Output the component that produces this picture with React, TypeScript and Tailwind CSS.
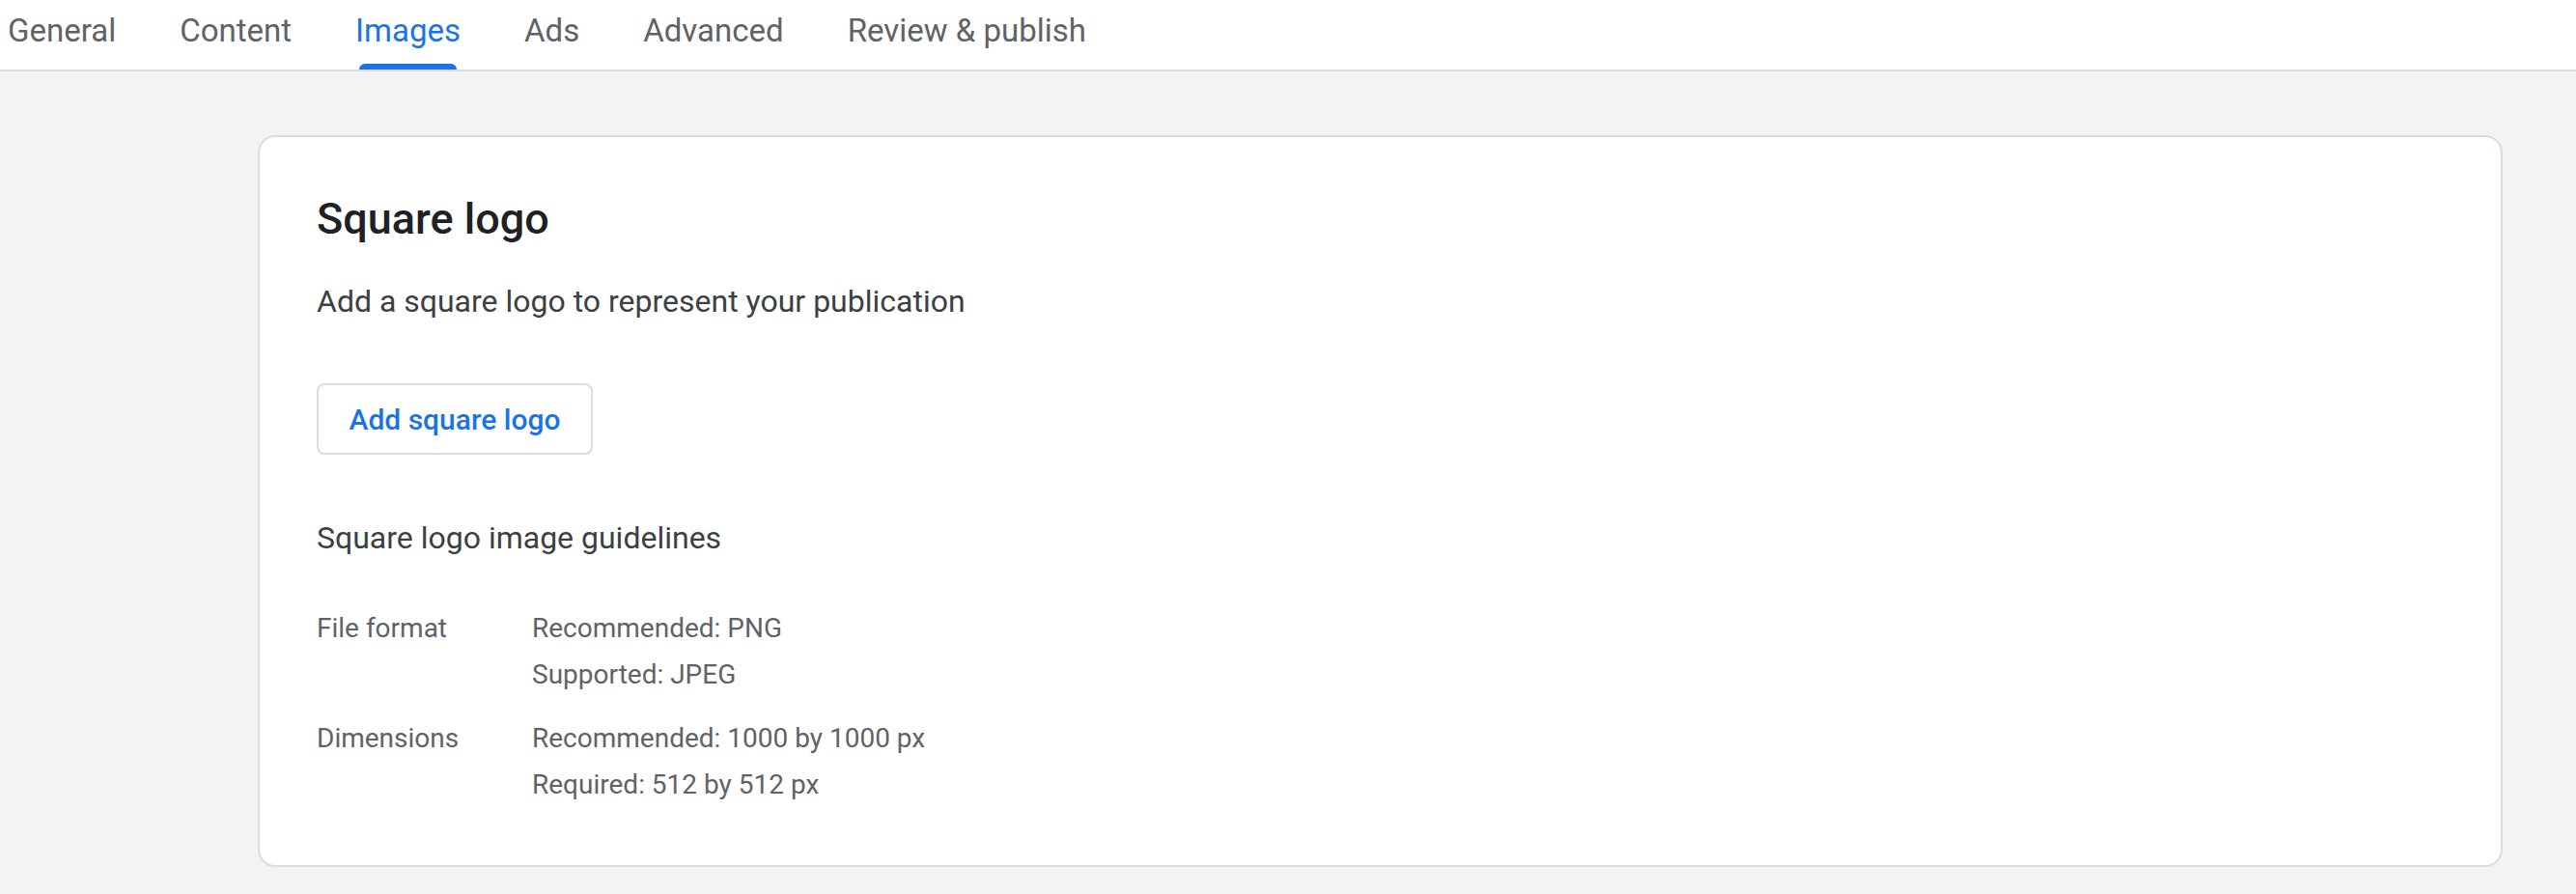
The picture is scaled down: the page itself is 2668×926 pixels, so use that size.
const tabs = ['General', 'Content', 'Images', 'Ads', 'Advanced', 'Review & publish']

const guidelines = [
    { label: 'File format', values: ['Recommended: PNG', 'Supported: JPEG'] },
    {
        label: 'Dimensions',
        values: ['Recommended: 1000 by 1000 px', 'Required: 512 by 512 px'],
    },
]

export default function App() {
    const active = 'Images'

    return (
        <div className="min-h-[926px] bg-[#f1f3f4] font-['Roboto',sans-serif]">
            {/* tab bar */}
            <div className="flex h-[74px] gap-[66px] border-b-2 border-[#dadce0] bg-white pl-2">
                {tabs.map((tab) => (
                    <div
                        key={tab}
                        className={`relative flex items-center text-[33px] ${
                            tab === active ? 'text-[#1a73e8]' : 'text-[#5f6368]'
                        }`}
                    >
                        <span className="-mt-[8px]">{tab}</span>
                        {tab === active && (
                            <span className="absolute bottom-0 left-1 right-1 h-[6px] rounded-t-[6px] bg-[#1a73e8]" />
                        )}
                    </div>
                ))}
            </div>

            <div className="pt-[66px] pb-[29px] pl-[267px] pr-[76px]">
                <div className="rounded-[18px] border-2 border-[#dadce0] bg-white px-[59px] pt-[59px] pb-[59px]">
                    <h2 className="text-[45px] leading-[52px] font-medium text-[#202124]">
                        Square logo
                    </h2>
                    <p className="mt-[39px] text-[32px] leading-[40px] text-[#3c4043]">
                        Add a square logo to represent your publication
                    </p>
                    <button className="mt-[65px] h-[74px] w-[286px] rounded-[8px] border-2 border-[#dadce0] text-[30px] font-medium text-[#1a73e8]">
                        Add square logo
                    </button>
                    <p className="mt-[64px] text-[32px] leading-[44px] text-[#3c4043]">
                        Square logo image guidelines
                    </p>
                    <div className="mt-[48px] flex flex-col gap-[18px] text-[28px] leading-[48px] text-[#5f6368]">
                        {guidelines.map((g) => (
                            <div key={g.label} className="flex">
                                <span className="w-[223px]">{g.label}</span>
                                <div className="flex flex-col">
                                    {g.values.map((v) => (
                                        <span key={v}>{v}</span>
                                    ))}
                                </div>
                            </div>
                        ))}
                    </div>
                </div>
            </div>
        </div>
    )
}
